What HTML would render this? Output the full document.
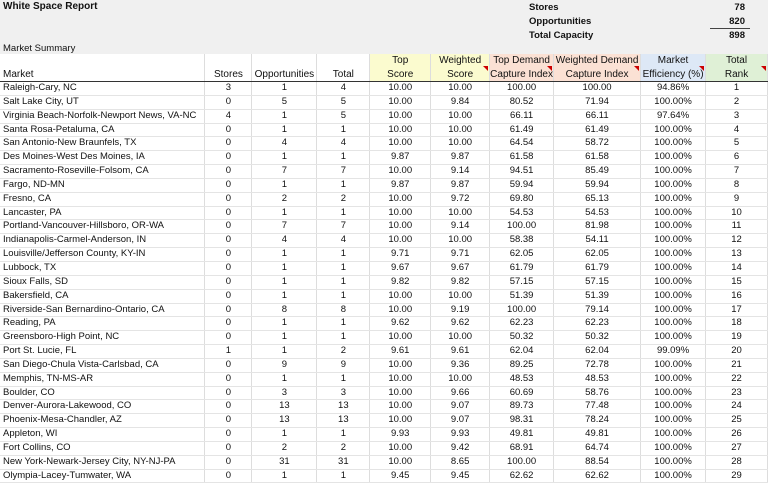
<!DOCTYPE html><html><head><style>
body{margin:0;width:768px;height:484px;overflow:hidden;background:#fff;font-family:"Liberation Sans",sans-serif;font-size:9.5px;color:#111}
.top{position:absolute;left:0;top:0;width:768px;height:54px;background:#f0f0f0}
.a{position:absolute;white-space:nowrap}
table{position:absolute;left:0;top:54px;border-collapse:collapse;table-layout:fixed}
td{height:12.85px;padding:0;text-align:center;border-right:1px solid #ddd;border-bottom:1px solid #e4e4e4;line-height:12.85px;white-space:nowrap;overflow:hidden}
td:first-child{text-align:left;padding-left:3px}
tr.h td{height:26px;border-bottom:1px solid #333;vertical-align:bottom;line-height:13.5px;position:relative;font-size:10px}
.y{background:#fbfbcf}.p{background:#fbe1d4}.b{background:#dde8f6}.g{background:#dff0d6}
.t{position:absolute;right:1px;bottom:10px;width:0;height:0;border-top:5px solid #c00;border-left:5px solid transparent}
</style></head><body>
<div class="top"></div>
<div class="a" style="left:3px;top:1px;font-weight:bold;font-size:10px">White Space Report</div>
<div class="a" style="left:529px;top:2px;font-weight:bold">Stores</div>
<div class="a" style="left:529px;top:16px;font-weight:bold">Opportunities</div>
<div class="a" style="left:529px;top:30px;font-weight:bold">Total Capacity</div>
<div class="a" style="left:715px;top:2px;width:30px;text-align:right;font-weight:bold">78</div>
<div class="a" style="left:715px;top:16px;width:30px;text-align:right;font-weight:bold">820</div>
<div style="position:absolute;left:710px;top:28px;width:40px;border-top:1px solid #444"></div>
<div class="a" style="left:715px;top:30px;width:30px;text-align:right;font-weight:bold">898</div>
<div class="a" style="left:3px;top:43px">Market Summary</div>
<table>
<colgroup><col style="width:205px"><col style="width:47px"><col style="width:65px"><col style="width:53px"><col style="width:61px"><col style="width:59px"><col style="width:64px"><col style="width:87px"><col style="width:65px"><col style="width:62px"></colgroup>
<tr class="h"><td>Market</td><td>Stores</td><td>Opportunities</td><td>Total</td><td class="y">Top<br>Score</td><td class="y">Weighted<br>Score<span class="t"></span></td><td class="p">Top Demand<br>Capture Index<span class="t"></span></td><td class="p">Weighted Demand<br>Capture Index<span class="t"></span></td><td class="b">Market<br>Efficiency (%)<span class="t"></span></td><td class="g">Total<br>Rank<span class="t"></span></td></tr>
<tr><td>Raleigh-Cary, NC</td><td>3</td><td>1</td><td>4</td><td>10.00</td><td>10.00</td><td>100.00</td><td>100.00</td><td>94.86%</td><td>1</td></tr>
<tr><td>Salt Lake City, UT</td><td>0</td><td>5</td><td>5</td><td>10.00</td><td>9.84</td><td>80.52</td><td>71.94</td><td>100.00%</td><td>2</td></tr>
<tr><td>Virginia Beach-Norfolk-Newport News, VA-NC</td><td>4</td><td>1</td><td>5</td><td>10.00</td><td>10.00</td><td>66.11</td><td>66.11</td><td>97.64%</td><td>3</td></tr>
<tr><td>Santa Rosa-Petaluma, CA</td><td>0</td><td>1</td><td>1</td><td>10.00</td><td>10.00</td><td>61.49</td><td>61.49</td><td>100.00%</td><td>4</td></tr>
<tr><td>San Antonio-New Braunfels, TX</td><td>0</td><td>4</td><td>4</td><td>10.00</td><td>10.00</td><td>64.54</td><td>58.72</td><td>100.00%</td><td>5</td></tr>
<tr><td>Des Moines-West Des Moines, IA</td><td>0</td><td>1</td><td>1</td><td>9.87</td><td>9.87</td><td>61.58</td><td>61.58</td><td>100.00%</td><td>6</td></tr>
<tr><td>Sacramento-Roseville-Folsom, CA</td><td>0</td><td>7</td><td>7</td><td>10.00</td><td>9.14</td><td>94.51</td><td>85.49</td><td>100.00%</td><td>7</td></tr>
<tr><td>Fargo, ND-MN</td><td>0</td><td>1</td><td>1</td><td>9.87</td><td>9.87</td><td>59.94</td><td>59.94</td><td>100.00%</td><td>8</td></tr>
<tr><td>Fresno, CA</td><td>0</td><td>2</td><td>2</td><td>10.00</td><td>9.72</td><td>69.80</td><td>65.13</td><td>100.00%</td><td>9</td></tr>
<tr><td>Lancaster, PA</td><td>0</td><td>1</td><td>1</td><td>10.00</td><td>10.00</td><td>54.53</td><td>54.53</td><td>100.00%</td><td>10</td></tr>
<tr><td>Portland-Vancouver-Hillsboro, OR-WA</td><td>0</td><td>7</td><td>7</td><td>10.00</td><td>9.14</td><td>100.00</td><td>81.98</td><td>100.00%</td><td>11</td></tr>
<tr><td>Indianapolis-Carmel-Anderson, IN</td><td>0</td><td>4</td><td>4</td><td>10.00</td><td>10.00</td><td>58.38</td><td>54.11</td><td>100.00%</td><td>12</td></tr>
<tr><td>Louisville/Jefferson County, KY-IN</td><td>0</td><td>1</td><td>1</td><td>9.71</td><td>9.71</td><td>62.05</td><td>62.05</td><td>100.00%</td><td>13</td></tr>
<tr><td>Lubbock, TX</td><td>0</td><td>1</td><td>1</td><td>9.67</td><td>9.67</td><td>61.79</td><td>61.79</td><td>100.00%</td><td>14</td></tr>
<tr><td>Sioux Falls, SD</td><td>0</td><td>1</td><td>1</td><td>9.82</td><td>9.82</td><td>57.15</td><td>57.15</td><td>100.00%</td><td>15</td></tr>
<tr><td>Bakersfield, CA</td><td>0</td><td>1</td><td>1</td><td>10.00</td><td>10.00</td><td>51.39</td><td>51.39</td><td>100.00%</td><td>16</td></tr>
<tr><td>Riverside-San Bernardino-Ontario, CA</td><td>0</td><td>8</td><td>8</td><td>10.00</td><td>9.19</td><td>100.00</td><td>79.14</td><td>100.00%</td><td>17</td></tr>
<tr><td>Reading, PA</td><td>0</td><td>1</td><td>1</td><td>9.62</td><td>9.62</td><td>62.23</td><td>62.23</td><td>100.00%</td><td>18</td></tr>
<tr><td>Greensboro-High Point, NC</td><td>0</td><td>1</td><td>1</td><td>10.00</td><td>10.00</td><td>50.32</td><td>50.32</td><td>100.00%</td><td>19</td></tr>
<tr><td>Port St. Lucie, FL</td><td>1</td><td>1</td><td>2</td><td>9.61</td><td>9.61</td><td>62.04</td><td>62.04</td><td>99.09%</td><td>20</td></tr>
<tr><td>San Diego-Chula Vista-Carlsbad, CA</td><td>0</td><td>9</td><td>9</td><td>10.00</td><td>9.36</td><td>89.25</td><td>72.78</td><td>100.00%</td><td>21</td></tr>
<tr><td>Memphis, TN-MS-AR</td><td>0</td><td>1</td><td>1</td><td>10.00</td><td>10.00</td><td>48.53</td><td>48.53</td><td>100.00%</td><td>22</td></tr>
<tr><td>Boulder, CO</td><td>0</td><td>3</td><td>3</td><td>10.00</td><td>9.66</td><td>60.69</td><td>58.76</td><td>100.00%</td><td>23</td></tr>
<tr><td>Denver-Aurora-Lakewood, CO</td><td>0</td><td>13</td><td>13</td><td>10.00</td><td>9.07</td><td>89.73</td><td>77.48</td><td>100.00%</td><td>24</td></tr>
<tr><td>Phoenix-Mesa-Chandler, AZ</td><td>0</td><td>13</td><td>13</td><td>10.00</td><td>9.07</td><td>98.31</td><td>78.24</td><td>100.00%</td><td>25</td></tr>
<tr><td>Appleton, WI</td><td>0</td><td>1</td><td>1</td><td>9.93</td><td>9.93</td><td>49.81</td><td>49.81</td><td>100.00%</td><td>26</td></tr>
<tr><td>Fort Collins, CO</td><td>0</td><td>2</td><td>2</td><td>10.00</td><td>9.42</td><td>68.91</td><td>64.74</td><td>100.00%</td><td>27</td></tr>
<tr><td>New York-Newark-Jersey City, NY-NJ-PA</td><td>0</td><td>31</td><td>31</td><td>10.00</td><td>8.65</td><td>100.00</td><td>88.54</td><td>100.00%</td><td>28</td></tr>
<tr><td>Olympia-Lacey-Tumwater, WA</td><td>0</td><td>1</td><td>1</td><td>9.45</td><td>9.45</td><td>62.62</td><td>62.62</td><td>100.00%</td><td>29</td></tr>
</table>
</body></html>
